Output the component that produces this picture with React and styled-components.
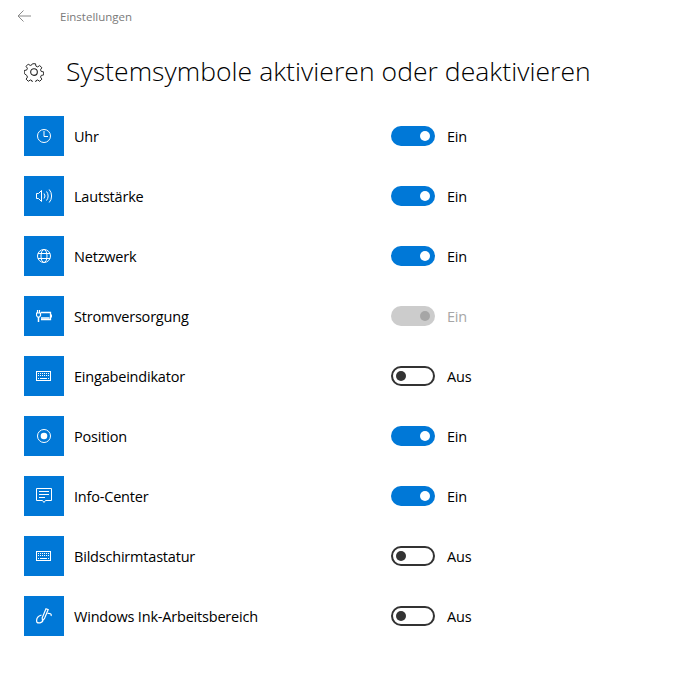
import React from 'react'
import styled, { createGlobalStyle } from 'styled-components'

const GlobalStyle = createGlobalStyle`
  html, body { margin: 0; padding: 0; background: #fff; }
  body { font-family: "Open Sans", "Noto Sans", sans-serif; color: #000; }
`

const Page = styled.div`
  width: 676px;
  height: 698px;
  overflow: hidden;
`

const TopBar = styled.div`
  display: flex;
  align-items: center;
  height: 32px;
  padding-left: 16px;
  gap: 28px;
  svg { display: block; }
`

const TopTitle = styled.span`
  font-size: 11.5px;
  color: #7a7a7a;
`

const Heading = styled.div`
  display: flex;
  align-items: center;
  gap: 22px;
  height: 40px;
  margin-top: 20px;
  margin-bottom: 24px;
  padding-left: 24px;
`

const Title = styled.h1`
  margin: 0 0 2px;
  font-size: 26.5px;
  font-weight: 300;
  letter-spacing: 0.05px;
  white-space: nowrap;
`

const List = styled.div`
  display: flex;
  flex-direction: column;
  gap: 20px;
  padding-left: 24px;
`

const Row = styled.div`
  display: grid;
  grid-template-columns: 40px 327px 44px auto;
  align-items: center;
  height: 40px;
`

const Tile = styled.div`
  width: 40px;
  height: 40px;
  background: #0078d7;
  display: flex;
  align-items: center;
  justify-content: center;
  svg { display: block; }
`

const Label = styled.span`
  margin-left: 10px;
  font-size: 14.5px;
  letter-spacing: -0.2px;
  white-space: nowrap;
`

const Track = styled.div`
  box-sizing: border-box;
  width: 44px;
  height: 20px;
  border-radius: 10px;
  display: flex;
  align-items: center;
  justify-content: ${p => (p.$on ? 'flex-end' : 'flex-start')};
  background: ${p => (p.$disabled ? '#cccccc' : p.$on ? '#0078d7' : '#fff')};
  border: ${p => (p.$on ? 'none' : '2px solid #333')};
  padding: ${p => (p.$on ? '0 5px' : '0 3px')};
`

const Knob = styled.div`
  width: 10px;
  height: 10px;
  border-radius: 50%;
  background: ${p => (p.$disabled ? '#a6a6a6' : p.$on ? '#fff' : '#333')};
`

const Status = styled.span`
  margin-left: 12px;
  font-size: 14.5px;
  letter-spacing: -0.2px;
  color: ${p => (p.$disabled ? '#a6a6a6' : '#000')};
`

const Glyph = ({ children }) => (
  <svg width="16" height="16" viewBox="0 0 16 16" fill="none" stroke="#fff" strokeWidth="1">
    {children}
  </svg>
)

const Keyboard = () => (
  <Glyph>
    <rect x="0.5" y="3.5" width="14" height="9" />
    <path d="M2 5.5h11M2 7.5h11" strokeDasharray="1 1" strokeWidth="1.2" />
    <path d="M4 10.5h7M2 10.5h1M12 10.5h1" strokeWidth="1.2" />
  </Glyph>
)

const icons = {
  clock: (
    <Glyph>
      <circle cx="8" cy="8" r="6.5" />
      <path d="M8 3V8.5H12" />
    </Glyph>
  ),
  volume: (
    <Glyph>
      <path d="M0.5 5.5H2.5L5.5 2.5V13.5L2.5 10.5H0.5Z" />
      <path d="M8 5.5a4 4 0 0 1 0 5M10.5 3.5a7 7 0 0 1 0 9M13.2 1.5a10 10 0 0 1 0 13" />
    </Glyph>
  ),
  globe: (
    <Glyph>
      <circle cx="8" cy="8" r="6.5" />
      <ellipse cx="8" cy="8" rx="3" ry="6.5" />
      <path d="M2 5.5H14M2 10.5H14" />
    </Glyph>
  ),
  power: (
    <Glyph>
      <path d="M5 4.5H14.5V11.5H5" strokeWidth="1.3" />
      <path d="M15.5 6.5V9.5" />
      <path d="M1.5 2V5M3.5 2V5" strokeWidth="1.2" />
      <path d="M0.5 5H4.5V7.5L3.5 9H1.5L0.5 7.5Z" strokeWidth="1.2" />
      <path d="M2.5 9V14" strokeWidth="1.5" />
      <path d="M5 10H13.5" strokeWidth="1.5" />
    </Glyph>
  ),
  keyboard: <Keyboard />,
  position: (
    <Glyph>
      <circle cx="8" cy="8" r="6.5" />
      <circle cx="8" cy="8" r="3.3" fill="#fff" stroke="none" />
    </Glyph>
  ),
  action: (
    <Glyph>
      <path d="M0.5 0.5H15.5V12.5H9.5L8 14.5L6.5 12.5H0.5Z" />
      <path d="M3 3.5H13M3 6.5H13M3 9.5H9" />
    </Glyph>
  ),
  ink: (
    <Glyph>
      <path d="M10 0.8L12.2 1.6L8.5 10.5L6.5 12.8L6.2 9.8Z" strokeWidth="1.2" />
      <path d="M11.5 5.5C13.5 5 16 6 15 8" strokeWidth="1.2" />
      <path d="M5.5 7C2.5 8 0 10.5 0.8 14C2.5 16 5.5 14.5 7 13" strokeWidth="1.2" />
    </Glyph>
  ),
}

const rows = [
  { icon: 'clock', label: 'Uhr', on: true },
  { icon: 'volume', label: 'Lautstärke', on: true },
  { icon: 'globe', label: 'Netzwerk', on: true },
  { icon: 'power', label: 'Stromversorgung', on: true, disabled: true },
  { icon: 'keyboard', label: 'Eingabeindikator', on: false },
  { icon: 'position', label: 'Position', on: true },
  { icon: 'action', label: 'Info-Center', on: true },
  { icon: 'keyboard', label: 'Bildschirmtastatur', on: false },
  { icon: 'ink', label: 'Windows Ink-Arbeitsbereich', on: false },
]

const App = () => (
  <Page>
    <GlobalStyle />
    <TopBar>
      <svg width="16" height="16" viewBox="0 0 16 16" fill="none" stroke="#8a8a8a" strokeWidth="1">
        <path d="M2 8H15M7.5 2.5L2 8L7.5 13.5" />
      </svg>
      <TopTitle>Einstellungen</TopTitle>
    </TopBar>
    <Heading>
      <svg width="20" height="20" viewBox="0 0 24 24" fill="none" stroke="#222" strokeWidth="1.3" strokeLinejoin="round">
        <path d="M10 1h4l.6 3.2 2.3 1 2.7-1.8 2.9 2.9-1.8 2.7 1 2.3 3.2.6v4l-3.2.6-1 2.3 1.8 2.7-2.9 2.9-2.7-1.8-2.3 1-.6 3.2h-4l-.6-3.2-2.3-1-2.7 1.8-2.9-2.9 1.8-2.7-1-2.3L-1 14v-4l3.2-.6 1-2.3-1.8-2.7 2.9-2.9 2.7 1.8 2.3-1z" transform="translate(1.2 1.2) scale(.9)" />
        <circle cx="12" cy="12" r="4" />
      </svg>
      <Title>Systemsymbole aktivieren oder deaktivieren</Title>
    </Heading>
    <List>
      {rows.map(({ icon, label, on, disabled }) => (
        <Row key={label}>
          <Tile>{icons[icon]}</Tile>
          <Label>{label}</Label>
          <Track $on={on} $disabled={disabled}>
            <Knob $on={on} $disabled={disabled} />
          </Track>
          <Status $disabled={disabled}>{on ? 'Ein' : 'Aus'}</Status>
        </Row>
      ))}
    </List>
  </Page>
)

export default App
